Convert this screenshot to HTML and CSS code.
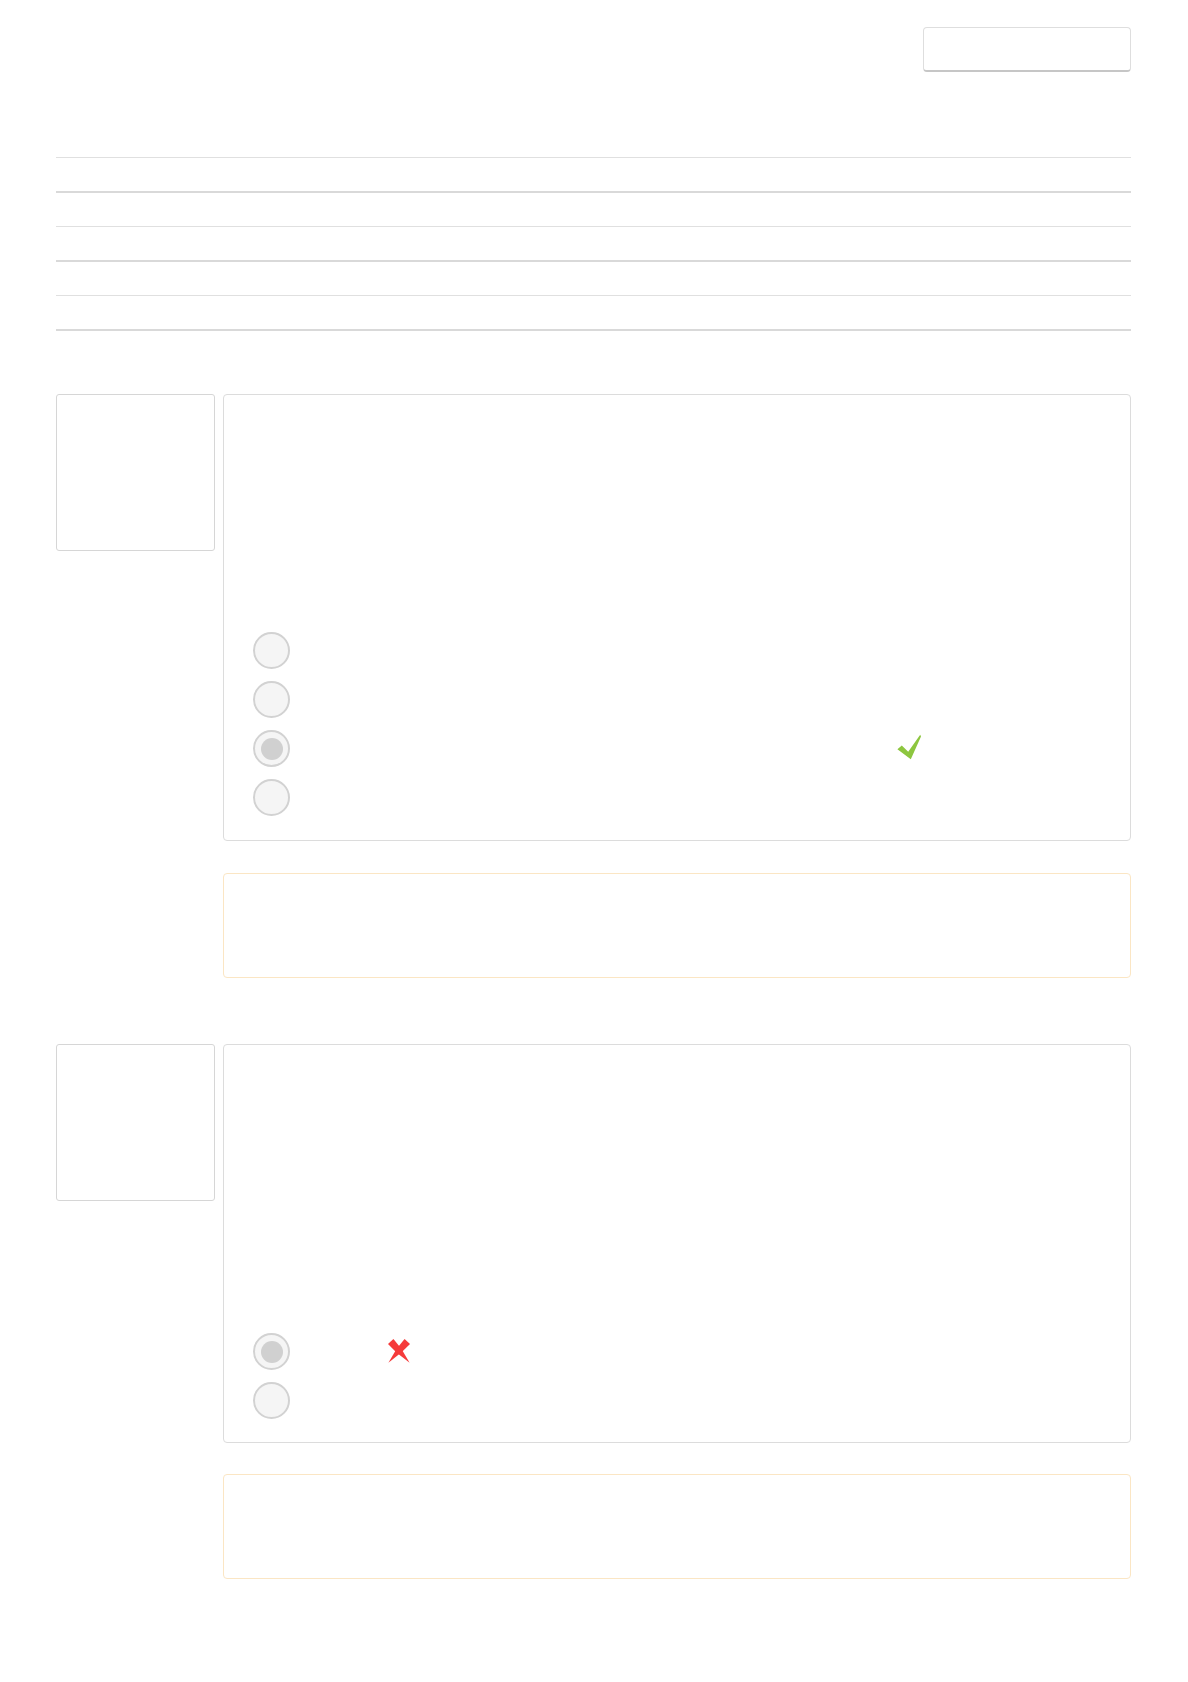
FILE: index.html
```html
<!DOCTYPE html>
<html lang="en">
<head>
    <meta charset="UTF-8">
    <meta name="viewport" content="width=device-width, initial-scale=1.0">
    <title>Quiz review</title>
    <link rel="stylesheet" href="styles.css">
</head>
<body>
    <div class="page">
        <div class="top-bar">
            <div class="finish-btn"></div>
        </div>

        <div class="summary">
            <div class="summary-row"></div>
            <div class="summary-row"></div>
            <div class="summary-row"></div>
        </div>

        <div class="question q-first">
            <div class="info"></div>
            <div class="question-main">
                <div class="formulation">
                    <div class="qtext"></div>
                    <div class="answers">
                        <div class="answer"><span class="radio"></span></div>
                        <div class="answer"><span class="radio"></span></div>
                        <div class="answer">
                            <span class="radio checked"></span>
                            <svg class="mark mark-check" width="24" height="26" viewBox="0 0 24 26">
                                <polygon points="0.4,15.2 4.8,11.6 11.2,17.8 23.2,0.8 24,2.4 13.8,25.2" fill="#8dc63f"/>
                            </svg>
                        </div>
                        <div class="answer"><span class="radio"></span></div>
                    </div>
                </div>
                <div class="outcome"></div>
            </div>
        </div>

        <div class="question q-second">
            <div class="info"></div>
            <div class="question-main">
                <div class="formulation">
                    <div class="qtext"></div>
                    <div class="answers">
                        <div class="answer">
                            <span class="radio checked"></span>
                            <svg class="mark mark-cross" width="22" height="24" viewBox="0 0 22 24">
                                <polygon points="0,5 5.4,0 13.2,9.4 21.6,23.8 8.4,13.6" fill="#f53b3b"/>
                                <polygon points="16.6,0 22,5 13.6,13.2 0.4,23.8 8.8,9.4" fill="#f53b3b"/>
                            </svg>
                        </div>
                        <div class="answer"><span class="radio"></span></div>
                    </div>
                </div>
                <div class="outcome"></div>
            </div>
        </div>
    </div>
</body>
</html>
```

FILE: styles.css
```css
body {
    margin: 0;
    font-family: "Liberation Sans", Arial, sans-serif;
    background-color: #fff;
    color: #333;
}
.page {
    padding: 27px 57px 80px 56px;
}
.top-bar {
    display: flex;
    justify-content: flex-end;
}
.finish-btn {
    width: 206px;
    height: 42px;
    border: 1px solid #dedede;
    border-bottom: 2px solid #c6c6c6;
    border-radius: 4px;
    background-color: #fff;
}
.summary {
    margin-top: 85px;
}
.summary-row {
    height: 33px;
    border-top: 1px solid #e0e0e0;
    border-bottom: 2px solid #d9d9d9;
    margin-bottom: 33px;
}
.summary-row:last-child {
    margin-bottom: 0;
}
.question {
    display: flex;
    align-items: flex-start;
    gap: 8px;
}
.q-first {
    margin-top: 63px;
}
.q-second {
    margin-top: 66px;
}
.info {
    width: 157px;
    height: 155px;
    border: 1px solid #d6d6d6;
    border-radius: 3px;
    flex-shrink: 0;
}
.question-main {
    flex: 1;
    display: flex;
    flex-direction: column;
    gap: 32px;
}
.q-second .question-main {
    gap: 31px;
}
.formulation {
    border: 1px solid #dcdcdc;
    border-radius: 4px;
    padding: 0 24px 18px 29px;
}
.q-first .qtext {
    height: 231px;
}
.q-second .qtext {
    height: 282px;
}
.q-second .formulation {
    padding-bottom: 17px;
}
.answer {
    height: 49px;
    display: flex;
    align-items: center;
}
.radio {
    width: 33px;
    height: 33px;
    border: 2px solid #d2d2d2;
    border-radius: 50%;
    background-color: #f5f5f5;
    display: flex;
    align-items: center;
    justify-content: center;
    flex-shrink: 0;
}
.radio.checked::after {
    content: "";
    width: 22px;
    height: 22px;
    border-radius: 50%;
    background-color: #d0d0d0;
}
.mark-check {
    margin-left: 607px;
    margin-bottom: 4px;
}
.mark-cross {
    margin-left: 98px;
    margin-bottom: 2px;
}
.outcome {
    height: 103px;
    border: 1px solid #fbe6c4;
    border-radius: 4px;
}
```
